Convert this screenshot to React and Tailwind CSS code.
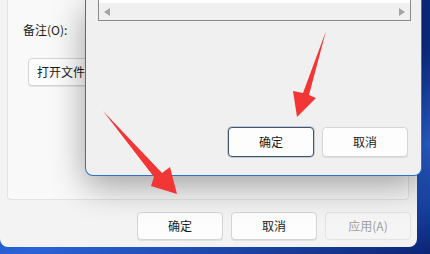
import React from "react";

// Botón estilo Windows 11
function WinButton({ children, focused = false, disabled = false, className = "" }) {
  const base =
    "w-[86px] flex items-center justify-center rounded-[4px] border text-[12px]";
  let look = "bg-[#fdfdfd] border-[#d5d5d5] text-[#1b1b1b] shadow-[0_1px_0_rgba(0,0,0,0.08)]";
  if (focused) look = "bg-[#fdfdfd] border-[#3d5670] text-[#1b1b1b] shadow-[0_0_0_1px_rgba(61,86,112,0.25)]";
  if (disabled) look = "bg-[#f5f5f5] border-[#e3e3e3] text-[#a0a0a0]";
  return <div className={`${base} ${look} ${className}`}>{children}</div>;
}

export default function App() {
  return (
    <div className="relative w-[430px] h-[254px] overflow-hidden bg-[linear-gradient(165deg,#081a52_0%,#0d2f8f_45%,#2a64d8_70%,#0b2474_100%)] font-['Noto_Sans_CJK_SC','Microsoft_YaHei',sans-serif]">
      {/* Ventana de propiedades (atrás) */}
      <div className="w-[417px] h-[247px] bg-[#f3f3f3] rounded-b-[8px] flex flex-col pl-[7px] pr-[7px]">
        <div className="w-[402px] h-[200px] bg-[#f9f9f9] border border-t-0 border-[#e3e3e3] rounded-b-[4px] pt-[22px] pl-[15px]">
          <div className="h-[16px] leading-[16px] text-[12px] text-[#1b1b1b]">备注(O):</div>
          <WinButton className="mt-[20px] ml-[5px] h-[28px] !w-[110px] !justify-start pl-[8px]">
            打开文件位置(F)
          </WinButton>
        </div>
        <div className="flex justify-end gap-[8px] mt-[12px] mr-[-1px]">
          <WinButton className="h-[28px]">确定</WinButton>
          <WinButton className="h-[28px]">取消</WinButton>
          <WinButton className="h-[28px]" disabled>应用(A)</WinButton>
        </div>
      </div>

      {/* Diálogo al frente */}
      <div className="absolute left-[85px] top-0 w-[337px] h-[176px] bg-[#f0f0f0] border border-t-0 border-[#2b74cc] rounded-b-[8px] shadow-[0_10px_34px_rgba(0,0,0,0.36)] flex flex-col pl-[12px] pr-[10px] pb-[18px]">
        <div className="w-[313px] h-[21px] border border-t-0 border-[#8a8a8a] bg-white flex flex-col">
          <div className="h-[3px] bg-white" />
          <div className="flex-1 bg-[#f0f0f0] flex items-center justify-between px-[5px]">
            <svg width="6" height="8" viewBox="0 0 6 8">
              <path d="M6 0 L0 4 L6 8 Z" fill="#a3a3a3" />
            </svg>
            <svg width="6" height="8" viewBox="0 0 6 8">
              <path d="M0 0 L6 4 L0 8 Z" fill="#a3a3a3" />
            </svg>
          </div>
        </div>
        <div className="mt-auto flex justify-end gap-[8px] pr-[3px]">
          <WinButton focused className="h-[30px]">确定</WinButton>
          <WinButton className="h-[30px]">取消</WinButton>
        </div>
      </div>

      {/* Flechas rojas de anotación */}
      <svg className="absolute inset-0 pointer-events-none" width="430" height="254" viewBox="0 0 430 254">
        <polygon
          points="103,111 154,177 151,186 177,194 170,167 162,173"
          fill="#f23636"
        />
        <polygon
          points="326,31 309,95 316,98 297,117 293,91 303,93"
          fill="#f23636"
        />
      </svg>
    </div>
  );
}
